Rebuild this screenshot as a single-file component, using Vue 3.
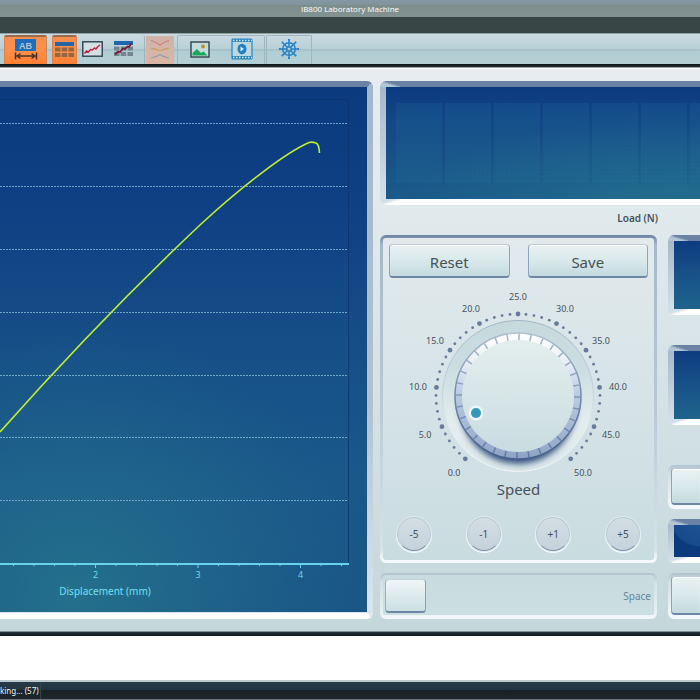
<script setup>
import { ref } from 'vue'

const gridLines = [123, 186, 249, 312, 375, 437, 500]
const ticks = Array.from({ length: 17 }, (_, i) => {
  const k = i - 4
  return { x: 95.5 + k * 20.5, major: k % 5 === 0, label: 2 + k / 5 }
})

const cx = 518
const cy = 396
const polar = (deg, r) => {
  const a = (deg * Math.PI) / 180
  return { x: cx + r * Math.sin(a), y: cy - r * Math.cos(a) }
}
const dots = Array.from({ length: 51 }, (_, i) => ({
  ...polar(-140 + i * 5.6, 82),
  r: i % 5 === 0 ? 2.4 : 1.4
}))
const notches = Array.from({ length: 32 }, (_, i) => i * 11.25 + 1)
const scale = [
  { t: '0.0', x: 454, y: 476 },
  { t: '5.0', x: 425, y: 438 },
  { t: '10.0', x: 418, y: 390 },
  { t: '15.0', x: 435, y: 344 },
  { t: '20.0', x: 471, y: 312 },
  { t: '25.0', x: 518, y: 300 },
  { t: '30.0', x: 565, y: 312 },
  { t: '35.0', x: 601, y: 344 },
  { t: '40.0', x: 618, y: 390 },
  { t: '45.0', x: 611, y: 438 },
  { t: '50.0', x: 583, y: 476 }
]
const speed = ref(5)
const steps = [-5, -1, 1, 5]
const bump = (n) => {
  speed.value = Math.min(50, Math.max(0, Number(speed.value) + n))
}
const spokes = [0, 45, 90, 135, 180, 225, 270, 315]
</script>

<template>
  <div class="app">
    <header class="title">IB800 Laboratory Machine</header>
    <div class="menu-strip"></div>

    <nav class="toolbar">
      <div class="group first">
        <button class="tool on wide" aria-label="Measure">
          <svg width="24" height="22" viewBox="0 0 24 22">
            <rect x="1" y="0" width="21" height="12" fill="#1d6fbe" />
            <text x="11.5" y="9.5" class="ab">AB</text>
            <path d="M1.500 13.500v7M22.500 13.500v7M3 17h18M6.500 14.500 3 17l3.500 2.500M17.500 14.500 21 17l-3.500 2.500" fill="none" stroke="#4a3229" stroke-width="1.500" />
          </svg>
        </button>
        <button class="tool on" aria-label="Table">
          <svg width="19" height="16" viewBox="0 0 19 16">
            <rect width="19" height="4" fill="#2a66a6" />
            <path d="M0 5.500h5.500v4H0zM6.700 5.500h5.500v4H6.700zM13.500 5.500H19v4h-5.500zM0 11h5.500v4H0zM6.700 11h5.500v4H6.700zM13.500 11H19v4h-5.500z" fill="#93673f" />
          </svg>
        </button>
        <button class="tool" aria-label="Graph">
          <svg width="21" height="16" viewBox="0 0 21 16">
            <rect x="0.800" y="0.800" width="19.400" height="14.400" fill="#d3e1e7" stroke="#2d3f4c" stroke-width="1.400" />
            <path d="m2.500 12.500 2-2.500 2 1 2-2.500 2 .5 2-2 1.500 1 2-2.500 2-1.500" fill="none" stroke="#c32342" stroke-width="1.500" />
          </svg>
        </button>
        <button class="tool combo" aria-label="Table and graph">
          <svg width="19" height="16" viewBox="0 0 19 16">
            <rect width="19" height="4" fill="#1c67ae" />
            <path d="M0 5.500h5.500v4H0zM6.700 5.500h5.500v4H6.700zM13.500 5.500H19v4h-5.500zM0 11h5.500v4H0zM6.700 11h5.500v4H6.700zM13.500 11H19v4h-5.500z" fill="#74868d" />
            <path d="m1 13.500 3-3 2 .5 3-3.500 2 .5 2.500-2.500 1.500.5 2.500-4" fill="none" stroke="#761c3d" stroke-width="1.800" />
          </svg>
        </button>
      </div>
      <div class="group fadegroup">
        <button class="tool faded" aria-label="Overlay">
          <svg width="20" height="20" viewBox="0 0 20 20" fill="none">
            <path d="M1 1.500q5 1.500 9 4.500 4-3 9-4.500" stroke="#cb7e7b" stroke-width="1.300" />
            <path d="M1 9.500q5 .5 9 2 4-1.500 9-2" stroke="#c6a269" stroke-width="1.300" />
            <path d="M1 19q5-.5 9-3.500 4 3 9 3.500" stroke="#8b9fae" stroke-width="1.200" />
          </svg>
        </button>
      </div>
      <div class="group media">
        <button class="tool" aria-label="Picture">
          <svg width="20" height="17" viewBox="0 0 20 17">
            <rect x="1" y="1" width="18" height="15" fill="#c5dcdf" stroke="#304448" stroke-width="1.400" />
            <path d="M2.500 14.500V12L7 8l4 4 2.500-1.500 4 4z" fill="#1aa757" />
            <circle cx="13" cy="5.500" r="2" fill="#b39a20" />
          </svg>
        </button>
        <button class="tool" aria-label="Video">
          <svg width="22" height="22" viewBox="0 0 22 22">
            <rect x="1" y="1" width="20" height="20" rx="1" fill="#bcd7e0" stroke="#2685c3" stroke-width="1.200" />
            <path d="M1 2.500h20M1 19.500h20" stroke="#2685c3" stroke-width="3" />
            <path d="M2 2.500h19M2 19.500h19" stroke="#d3e9f1" stroke-width="1.500" stroke-dasharray="1.500 1.500" />
            <ellipse cx="11" cy="11" rx="4.500" ry="5.300" fill="#2080c4" />
            <path d="m9.500 8.500 3.500 2.500-3.500 2.500z" fill="#d6ebf4" />
          </svg>
        </button>
      </div>
      <div class="group helm">
        <button class="tool" aria-label="Control">
          <svg width="22" height="22" viewBox="-11 -11 22 22" fill="none" stroke="#2483c5" stroke-width="1.500">
            <circle r="6.300" />
            <circle r="2.200" />
            <path v-for="a in spokes" :key="a" d="M0-2.500V-9.500M-1-9.300h2" :transform="`rotate(${a})`" />
          </svg>
        </button>
      </div>
    </nav>
    <div class="rule"></div>

    <main class="main">
      <section class="bezel chart-bezel">
        <svg class="chart" viewBox="0 87 367 525">
          <defs>
            <linearGradient id="chartBase" x1="0" y1="0" x2="0" y2="1">
              <stop offset="0" stop-color="#0b3a7f" />
              <stop offset="0.250" stop-color="#104184" />
              <stop offset="0.500" stop-color="#164f87" />
              <stop offset="0.750" stop-color="#1a588a" />
              <stop offset="1" stop-color="#1a5687" />
            </linearGradient>
            <radialGradient id="chartGlow" gradientUnits="userSpaceOnUse" cx="0" cy="0" r="1" gradientTransform="translate(75 595) scale(290 270)">
              <stop offset="0" stop-color="#287b8e" stop-opacity="0.700" />
              <stop offset="0.500" stop-color="#26758d" stop-opacity="0.380" />
              <stop offset="1" stop-color="#226c8c" stop-opacity="0" />
            </radialGradient>
          </defs>
          <rect y="87" width="367" height="525" fill="url(#chartBase)" />
          <rect y="87" width="367" height="525" fill="url(#chartGlow)" />
          <path d="M0 99.500H348.500V563" fill="none" stroke="#0b2f66" stroke-opacity="0.600" />
          <line v-for="y in gridLines" :key="y" x1="0" x2="348" :y1="y + 0.5" :y2="y + 0.5" class="grid" />
          <path d="M0 432C70 353 130 291 200 225C240 188 285 153 309 142.500Q312 141.500 316 143 319 144 319.500 153" fill="none" stroke="#c0ee2e" stroke-width="1.600" />
          <path d="M0 564H349" stroke="#68d3ea" stroke-width="2" />
          <template v-for="t in ticks" :key="t.x">
            <line :x1="t.x" :x2="t.x" y1="564" :y2="t.major ? 568 : 566" stroke="#68d3ea" />
            <text v-if="t.major" :x="t.x" y="578" class="tick">{{ t.label }}</text>
          </template>
          <text x="105" y="595" class="axis">Displacement (mm)</text>
        </svg>
      </section>

      <section class="side">
        <div class="bezel open">
          <div class="screen load"><div class="cells"></div></div>
        </div>
        <h2 class="load-label">Load (N)</h2>

        <div class="lower">
          <div class="controls">
            <div class="panel">
              <div class="actions">
                <button class="key">Reset</button>
                <button class="key">Save</button>
              </div>
              <div class="dial">
                <svg viewBox="389 284 259 198">
                  <defs>
                    <linearGradient id="ring" x1="0" y1="0" x2="0" y2="1">
                      <stop offset="0" stop-color="#c6d9dd" />
                      <stop offset="0.300" stop-color="#cbdde0" />
                      <stop offset="0.700" stop-color="#e4eeef" />
                      <stop offset="1" stop-color="#dae7e9" />
                    </linearGradient>
                    <linearGradient id="ringEdge" x1="0" y1="0" x2="0" y2="1">
                      <stop offset="0" stop-color="#9fb5c4" />
                      <stop offset="0.500" stop-color="#c6d5df" />
                      <stop offset="0.750" stop-color="#e8f1f3" />
                      <stop offset="1" stop-color="#eef5f6" />
                    </linearGradient>
                    <linearGradient id="rim" x1="0" y1="0" x2="0" y2="1">
                      <stop offset="0" stop-color="#ffffff" />
                      <stop offset="0.200" stop-color="#edf2f9" />
                      <stop offset="0.500" stop-color="#b9c9e0" />
                      <stop offset="1" stop-color="#8fa4c6" />
                    </linearGradient>
                    <linearGradient id="rimEdge" x1="0" y1="0" x2="0" y2="1">
                      <stop offset="0" stop-color="#afc2cf" />
                      <stop offset="0.500" stop-color="#6f88ac" />
                      <stop offset="1" stop-color="#465f8c" />
                    </linearGradient>
                    <linearGradient id="face" x1="0" y1="0" x2="0" y2="1">
                      <stop offset="0" stop-color="#e4eeee" />
                      <stop offset="1" stop-color="#c9dce0" />
                    </linearGradient>
                    <linearGradient id="notch" gradientUnits="userSpaceOnUse" x1="0" y1="333" x2="0" y2="459">
                      <stop offset="0" stop-color="#a9bacb" />
                      <stop offset="0.500" stop-color="#8299b9" />
                      <stop offset="1" stop-color="#6078a2" />
                    </linearGradient>
                    <filter id="soft" x="-20%" y="-20%" width="140%" height="140%"><feGaussianBlur stdDeviation="3" /></filter>
                    <clipPath id="ringClip"><circle :cx="cx" :cy="cy" r="75" /></clipPath>
                  </defs>
                  <circle v-for="(d, i) in dots" :key="i" :cx="d.x" :cy="d.y" :r="d.r" fill="#667c99" />
                  <text v-for="s in scale" :key="s.t" :x="s.x" :y="s.y" class="num">{{ s.t }}</text>
                  <circle :cx="cx" :cy="cy" r="75.5" fill="url(#ring)" stroke="url(#ringEdge)" />
                  <g clip-path="url(#ringClip)">
                    <circle :cx="cx" :cy="cy + 10" r="58" fill="#385381" filter="url(#soft)" />
                  </g>
                  <circle :cx="cx" :cy="cy" r="63" fill="url(#rim)" stroke="url(#rimEdge)" stroke-width="1.500" />
                  <path v-for="a in notches" :key="a" :d="`M${polar(a, 62.5).x} ${polar(a, 62.5).y}L${polar(a, 56).x} ${polar(a, 56).y}`" class="notch" />
                  <circle :cx="cx" :cy="cy" r="56" fill="url(#face)" />
                  <circle cx="476" cy="413" r="7.500" fill="#edf6f8" />
                  <circle cx="476" cy="413" r="5" fill="#3499b9" />
                </svg>
                <input id="speed" v-model="speed" class="dial-input" type="range" min="0" max="50" />
              </div>
              <label class="speed" for="speed">Speed</label>
              <div class="steps">
                <button v-for="n in steps" :key="n" class="round" @click="bump(n)">{{ n > 0 ? '+' + n : n }}</button>
              </div>
            </div>
            <label class="panel space">
              <input type="checkbox" class="thumb" />
              <span>Space</span>
            </label>
          </div>

          <div class="readouts">
            <div class="bezel open"><div class="screen small"></div></div>
            <div class="bezel open second"><div class="screen small"></div></div>
            <div class="well third"><button class="key blank" aria-label="Tare"></button></div>
            <div class="bezel open"><div class="screen tiny"></div></div>
            <div class="well last"><button class="key blank" aria-label="Zero"></button></div>
          </div>
        </div>
      </section>
    </main>

    <div class="rule bottom"></div>
    <div class="gap"></div>
    <footer class="status"><span>king... (57)</span></footer>
  </div>
</template>

<style>
body {
  margin: 0;
  background: #fff;
}
</style>

<style scoped>
.app {
  font-family: "Noto Sans", "Open Sans", sans-serif;
  color: #44525a;
  overflow: hidden;
}
button {
  font: inherit;
  color: inherit;
  padding: 0;
  margin: 0;
}
.title {
  height: 17px;
  line-height: 18px;
  text-align: center;
  font-family: "Open Sans", sans-serif;
  font-size: 8px;
  color: #fff;
  background: linear-gradient(#8499a3 0, #7f939b 30%, #7d8e8f 31%, #82928f 100%);
}
.menu-strip {
  height: 16px;
  background: #384645;
}
.toolbar {
  height: 31px;
  box-sizing: border-box;
  border-top: 1px solid #8fa1a8;
  display: flex;
  align-items: flex-end;
  background: linear-gradient(#cbdae1 0, #b9d0d7 48%, #a5bfca 52%, #b1ced4 60%, #b3cfd4 100%);
}
.group {
  height: 29px;
  box-sizing: border-box;
  display: flex;
  align-items: center;
  border: 1px solid #9fb5bf;
  border-bottom: 0;
  border-radius: 2px 2px 0 0;
}
.first {
  width: 145px;
  border-width: 0 1px 0 0;
  padding-left: 4px;
  gap: 5px;
}
.fadegroup {
  width: 30px;
  border: 0;
  padding-left: 1px;
  margin-right: 2px;
}
.media {
  width: 88px;
  justify-content: space-between;
  padding: 0 11px 0 12px;
}
.helm {
  width: 46px;
  margin-left: 1px;
  justify-content: center;
}
.tool {
  border: 0;
  background: none;
  display: flex;
  align-items: center;
  justify-content: center;
  height: 28px;
  padding-bottom: 2px;
  box-sizing: border-box;
}
.on {
  width: 25px;
  height: 29px;
  background: linear-gradient(#f48e4f 0, #ff8f49 50%, #ff7f33 100%);
  border: 1px solid #d98250;
  border-top: 2px solid #9b6c4b;
  border-bottom: 0;
  border-radius: 2px 2px 0 0;
}
.wide {
  width: 43px;
}
.combo {
  margin-left: 6px;
}
.faded {
  width: 28px;
  background: linear-gradient(#cfb3a8, #dbb6a5);
}
.ab {
  font: bold 9px "Liberation Sans", sans-serif;
  fill: #b9c3cb;
  text-anchor: middle;
}
.rule {
  height: 5px;
  background: linear-gradient(#0c1418 0, #263034 60%, #9aa2a5 60%, #9aa2a5 80%, #fff 80%);
}
.bottom {
  background: linear-gradient(#7c9099 0, #7c9099 20%, #22333a 20%, #0e181c 100%);
}
.main {
  display: grid;
  grid-template-columns: minmax(0, 373fr) minmax(0, 320fr);
  gap: 7px;
  padding: 12px 0 12px;
  background: linear-gradient(#e6ecef, #dfe9ec 30%, #c4d7db);
}
.bezel {
  box-sizing: border-box;
  padding: 6px;
  border-radius: 6px;
}
.chart-bezel {
  padding-left: 0;
  border-radius: 0 6px 6px 0;
  background:
    linear-gradient(to bottom right, #6b82a4 50%, #a3b7ca 50%) 100% 0 / 6px 6px no-repeat,
    linear-gradient(to top right, #fff 50%, #e0eaf0 50%) 100% 100% / 6px 6px no-repeat,
    linear-gradient(#6b82a4, #6b82a4) 0 0 / 100% 6px no-repeat,
    linear-gradient(#fff, #fff) 0 100% / 100% 6px no-repeat,
    linear-gradient(#a3b7ca, #b0c2d2 60%, #dbe6ec);
}
.open {
  padding-right: 0;
  border-radius: 6px 0 0 6px;
  background:
    linear-gradient(to top right, #b4c6d5 40%, #6b82a4 62%) 0 0 / 20px 6px no-repeat,
    linear-gradient(to bottom right, #d3dfe8 40%, #fff 62%) 0 100% / 20px 6px no-repeat,
    linear-gradient(#6b82a4, #6b82a4) 0 0 / 100% 6px no-repeat,
    linear-gradient(#fff, #fff) 0 100% / 100% 6px no-repeat,
    linear-gradient(#a2b5c9, #d8e3eb);
}
.chart {
  display: block;
  width: 100%;
  height: auto;
}
.grid {
  stroke: #83b6d4;
  stroke-dasharray: 2 1;
  stroke-opacity: 0.85;
}
.tick {
  font-size: 9px;
  fill: #6fd8ee;
  text-anchor: middle;
}
.axis {
  font-size: 10px;
  fill: #74e0f3;
  text-anchor: middle;
}
.side {
  display: flex;
  flex-direction: column;
}
.screen {
  background:
    radial-gradient(ellipse 280px 90px at 290px 110%, #287990b0 0, #24709070 50%, #1f688c00 100%),
    linear-gradient(#0c3a80, #134787 30%, #184f87 60%, #1b5b8a);
}
.load {
  height: 112px;
  box-sizing: border-box;
  padding: 16px 0 16px 10px;
}
.cells {
  height: 80px;
  background:
    repeating-linear-gradient(90deg, #2680a02b 0, #2680a02b 46px, transparent 46px, transparent 49px),
    repeating-linear-gradient(90deg, transparent 0, transparent 3px, #123f7a1c 3px, #123f7a1c 4px),
    repeating-linear-gradient(transparent 0, transparent 3px, #123f7a1c 3px, #123f7a1c 4px);
}
.load-label {
  margin: 0;
  height: 30px;
  line-height: 26px;
  padding-right: 42px;
  text-align: right;
  font-size: 10px;
  font-weight: 600;
}
.lower {
  display: grid;
  grid-template-columns: minmax(0, 277fr) minmax(0, 32fr);
  gap: 11px;
}
.controls {
  display: flex;
  flex-direction: column;
  gap: 10px;
}
.panel {
  box-sizing: border-box;
  border: 3px solid transparent;
  border-radius: 6px;
  display: flex;
  flex-direction: column;
  padding: 6px;
  height: 328px;
  background:
    linear-gradient(#e2eaed, #c9dce0) padding-box,
    linear-gradient(#6c83a3 0, #a6b9cb 3%, #b7c8d6 50%, #d5e3e8 96%, #f4f9fa 99%) border-box;
}
.actions {
  display: flex;
  gap: 18px;
}
.key {
  flex: 1;
  height: 34px;
  box-sizing: border-box;
  font-size: 15px;
  border: 1px solid;
  border-color: #bccbd5 #8ea3b8 #6f87a6 #8ea3b8;
  border-bottom-width: 2px;
  border-radius: 4px;
  background: linear-gradient(#e9f1f2, #d9e9eb 50%, #c3dade);
  box-shadow: inset 0 1px 1px #fff;
}
.actions .key {
  padding-top: 2px;
}
.dial {
  position: relative;
  margin-top: 6px;
}
.dial svg {
  display: block;
  width: 100%;
}
.dial-input {
  position: absolute;
  inset: 0;
  width: 100%;
  height: 100%;
  margin: 0;
  opacity: 0;
}
.num {
  font-size: 9px;
  fill: #45535d;
  text-anchor: middle;
}
.notch {
  stroke: url(#notch);
  stroke-width: 1.5;
}
.speed {
  text-align: center;
  font-size: 15px;
  line-height: 14px;
}
.steps {
  display: flex;
  justify-content: space-between;
  padding: 21px 8px 0;
}
.round {
  width: 34px;
  height: 34px;
  box-sizing: border-box;
  border-radius: 50%;
  border: 1px solid #bccbd4;
  border-bottom-color: #7f92a8;
  background: linear-gradient(#d3dee4, #c5d2dc);
  box-shadow: 0 0 0 1px #dfebee, 0 1px 0 1px #f5fafb;
  font-size: 10px;
}
.space {
  height: 46px;
  flex-direction: row;
  align-items: center;
  justify-content: space-between;
  padding: 2px 3px 0 2px;
  border-width: 2px 3px 4px 3px;
  background:
    linear-gradient(#c8dbdf, #cbdfe2) padding-box,
    linear-gradient(#aec1cb 0, #d3e1e6 20%, #e6eff2 85%, #f5fafb 100%) border-box;
  font-size: 10px;
  color: #68839f;
}
.thumb {
  appearance: none;
  box-sizing: border-box;
  margin: 0;
  width: 41px;
  height: 34px;
  border: 1px solid;
  border-color: #c2d1d9 #8ca1b6 #6f87a6 #9eb1c2;
  border-bottom-width: 2px;
  border-radius: 4px;
  background: linear-gradient(#f0f6f7, #cbdfe3);
}
.readouts {
  display: flex;
  flex-direction: column;
}
.small {
  height: 68px;
  background: linear-gradient(#0d3c80, #174f87 45%, #1f648d);
}
.tiny {
  height: 32px;
  background: radial-gradient(circle 30px at 26px -8px, #1c5594 0, #174b8c 95%, #0c3a7c 100%);
}
.second {
  margin: 30px 0 40px;
}
.well {
  display: flex;
  box-sizing: border-box;
  height: 44px;
  border: solid transparent;
  border-width: 3px 0 4px 3px;
  border-radius: 6px 0 0 6px;
  background: linear-gradient(#b0c3cd 0, #d3e0e6 20%, #f5fafb) border-box;
}
.third {
  margin-bottom: 10px;
}
.last {
  margin-top: 10px;
  height: 46px;
}
.blank {
  height: auto;
  border-right: 0;
  border-radius: 4px 0 0 4px;
}
.gap {
  height: 44px;
}
.status {
  height: 20px;
  box-sizing: border-box;
  border-top: 2px solid #bcc9cc;
  border-bottom: 1px solid #68777a;
  background: linear-gradient(#283a47 0, #233440 45%, #182226 46%, #1d2829 100%);
  color: #eef3f4;
  font-size: 8px;
  line-height: 17px;
}
.status span {
  display: inline-block;
  padding-right: 1px;
  border-right: 1px solid #35434a;
  white-space: nowrap;
}
</style>
